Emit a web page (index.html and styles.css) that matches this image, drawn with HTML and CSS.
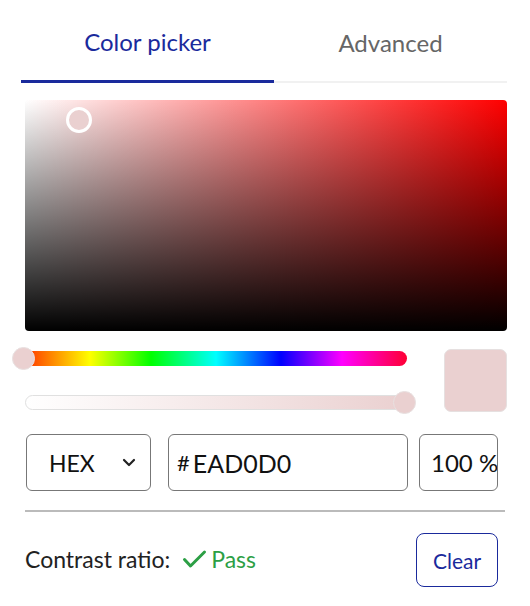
FILE: index.html
```html
<!DOCTYPE html>
<html lang="en">
<head>
    <meta charset="UTF-8">
    <meta name="viewport" content="width=device-width, initial-scale=1.0">
    <title>Color picker</title>
    <link rel="stylesheet" href="styles.css">
</head>
<body>
    <div class="picker">
        <!-- Tabs -->
        <div class="tabs">
            <div class="tab active">Color picker</div>
            <div class="tab">Advanced</div>
        </div>

        <!-- Saturation / brightness area -->
        <div class="saturation">
            <span class="sat-handle"></span>
        </div>

        <!-- Hue + alpha sliders with swatch -->
        <div class="sliders-row">
            <div class="sliders">
                <div class="track hue">
                    <span class="thumb thumb-start"></span>
                </div>
                <div class="track alpha">
                    <span class="thumb thumb-end"></span>
                </div>
            </div>
            <div class="swatch"></div>
        </div>

        <!-- Value inputs -->
        <div class="inputs-row">
            <div class="field select">
                <span>HEX</span>
                <svg class="chevron" width="14" height="9" viewBox="0 0 14 9">
                    <path d="M2 2l5 5 5-5" fill="none" stroke="#222" stroke-width="2.2" stroke-linecap="round" stroke-linejoin="round"/>
                </svg>
            </div>
            <div class="field hex">
                <span class="hash">#</span>
                <span>EAD0D0</span>
            </div>
            <div class="field percent">
                <span>100 %</span>
            </div>
        </div>

        <hr class="divider">

        <!-- Contrast -->
        <div class="footer">
            <div class="contrast">
                Contrast ratio:
                <span class="pass">
                    <svg width="25" height="20" viewBox="0 0 25 20">
                        <path d="M2.5 10.5l6 6.5 14-14" fill="none" stroke="#2c9f45" stroke-width="3" stroke-linecap="round" stroke-linejoin="round"/>
                    </svg>
                    Pass
                </span>
            </div>
            <button class="btn-clear">Clear</button>
        </div>
    </div>
</body>
</html>
```

FILE: styles.css
```css
body {
    margin: 0;
    font-family: "Lato", "Open Sans", sans-serif;
    background: #fff;
    color: #222;
}
.picker {
    width: 530px;
    box-sizing: border-box;
    padding: 0 23px 0 21px;
}
.tabs {
    display: flex;
    height: 83px;
}
.tab {
    flex: 1;
    display: flex;
    align-items: center;
    justify-content: center;
    padding-top: 2px;
    font-size: 24px;
    color: #666;
    border-bottom: 2px solid #f1f1f1;
    margin-top: 1px;
}
.tab.active {
    color: #1a2a9c;
    border-bottom: 3px solid #1a2a9c;
    flex: 0 0 253px;
    margin-top: 0;
}
.saturation {
    position: relative;
    margin: 17px 0 0 4px;
    height: 231px;
    border-radius: 4px;
    background:
        linear-gradient(to top, #000, rgba(0, 0, 0, 0)),
        linear-gradient(to right, #fff, #f00);
}
.sat-handle {
    position: absolute;
    left: 41px;
    top: 7px;
    width: 20px;
    height: 20px;
    border: 3px solid #fff;
    border-radius: 50%;
    background: #ead0d0;
}
.sliders-row {
    display: flex;
    align-items: flex-start;
    margin-top: 18px;
    padding-left: 4px;
}
.sliders {
    width: 382px;
}
.track {
    position: relative;
    height: 15px;
    border-radius: 8px;
}
.hue {
    margin-top: 2px;
    background: linear-gradient(to right, #f30 0%, #ff0 17%, #0f0 33%, #0ff 50%, #00f 67%, #f0f 83%, #f03 100%);
}
.alpha {
    margin-top: 29px;
    box-sizing: border-box;
    border: 1px solid #e0e0e0;
    background: linear-gradient(to right, #fff, #ead0d0);
}
.thumb {
    position: absolute;
    top: -4px;
    width: 21px;
    height: 21px;
    border-radius: 50%;
    background: #ead0d0;
    border: 1px solid #e8e0e0;
}
.thumb-start {
    left: -13px;
}
.thumb-end {
    right: -10px;
    top: -5px;
}
.swatch {
    margin-left: 37px;
    width: 61px;
    height: 61px;
    border-radius: 7px;
    background: #ead0d0;
    border: 1px solid #e6e0e0;
}
.inputs-row {
    display: flex;
    margin-top: 22px;
    padding-left: 5px;
}
.field {
    box-sizing: border-box;
    height: 57px;
    border: 1px solid #777;
    border-radius: 6px;
    display: flex;
    align-items: center;
    font-size: 23px;
    color: #111;
}
.select {
    width: 125px;
    padding: 0 14px 0 22px;
    justify-content: space-between;
}
.hex {
    width: 240px;
    margin-left: 17px;
    padding-left: 8px;
    font-size: 25px;
}
.hash {
    margin-right: 3px;
    font-size: 22px;
}
.percent {
    width: 79px;
    margin-left: 11px;
    padding-left: 11px;
    overflow: hidden;
    white-space: nowrap;
    font-size: 24px;
}
.divider {
    margin: 19px 2px 0 4px;
    border: none;
    border-top: 2px solid #bbb;
}
.footer {
    display: flex;
    align-items: center;
    justify-content: space-between;
    margin-top: 21px;
    padding-left: 4px;
}
.contrast {
    font-size: 23px;
    color: #222;
    display: flex;
    align-items: center;
    padding-bottom: 3px;
}
.pass {
    color: #2c9f45;
    display: flex;
    align-items: center;
    margin-left: 12px;
}
.pass svg {
    margin-right: 4px;
}
.btn-clear {
    width: 82px;
    height: 54px;
    margin-right: 9px;
    background: #fff;
    border: 1px solid #1a2a9c;
    border-radius: 8px;
    color: #1a2a9c;
    font-family: inherit;
    font-size: 21px;
}
```
